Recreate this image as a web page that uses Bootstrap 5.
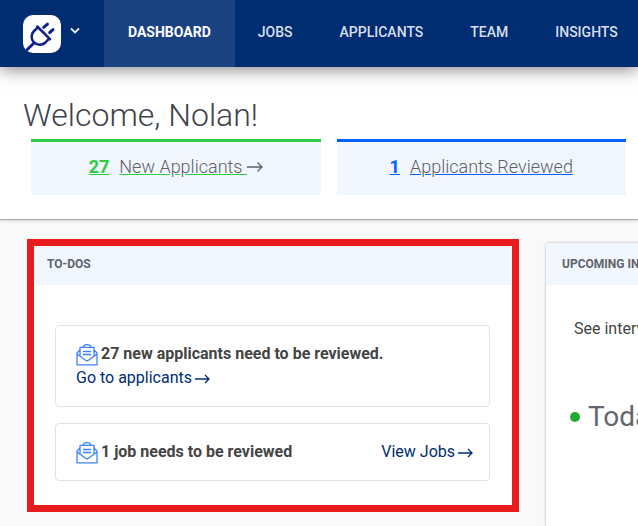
<!DOCTYPE html>
<html lang="en">
<head>
<meta charset="utf-8">
<meta name="viewport" content="width=device-width, initial-scale=1">
<title>Dashboard</title>
<link href="https://cdn.jsdelivr.net/npm/bootstrap@5.3.0/dist/css/bootstrap.min.css" rel="stylesheet">
<style>
  body { font-family: Roboto, "Liberation Sans", sans-serif; font-size: 16px; line-height: 24px; color: #444; background: #f9f9f9; overflow-x: hidden; }
  .topbar { background: #002d72; height: 67px; box-shadow: 0 2px 16px rgba(0,0,0,.5); z-index: 2; }
  .brand-menu { padding: 0 24px 6px 23px; gap: 9px; }
  .brand-menu svg:first-child { margin-top: 6px; }
  .topbar .nav-link { color: #d8dfea; font-size: 14px; font-weight: 500; padding: 0 24px 3px; }
  .topbar .nav-link:not(.active) { padding: 0 24px 3px 23px; }
  .topbar .nav-link.active { color: #fff; font-weight: 700; background: #1a4180; }
  .welcome { padding: 30px 12px 24px 23px; border-bottom: 1px solid #a8a8a8; box-shadow: 0 1px 3px rgba(0,0,0,.15); }
  .welcome h1 { font-size: 32px; line-height: 36px; font-weight: 300; margin-bottom: 6px; color: #3e444c; }
  .stats { gap: 16px; padding-left: 8px; }
  .stat { height: 56px; padding-bottom: 4px; background: #f1f6ff; border-top: 3px solid; font-size: 18px; font-weight: 300; gap: 10px; }
  .stat-label, .stat svg { color: #5c6068; }
  .stat-new { color: #2ecc40; }
  .stat-reviewed { color: #0061ff; }
  .panels { padding: 19px 0 0 27px; gap: 27px; }
  .todos { flex: 0 0 calc(100% - 119px); border: 7px solid #e81c1c; margin-bottom: 14px; }
  .panel-title { background: #f1f6ff; color: #5f636a; font-size: 12px; line-height: 15px; font-weight: 700; padding: 11px 13px 13px; margin: 0; }
  .todo-list { padding: 40px 22px 24px 21px; gap: 16px; }
  .todo { border: 1px solid #e3e3e3; border-radius: 4px; padding: 16px 16px 16px 20px; }
  .todo strong { font-weight: 700; color: #444; }
  .todo a { color: #002d72; }
  .todo-line { gap: 3px; }
  .todo-icon, .todo-arrow { margin-top: 2px; }
  .upcoming { flex: 0 0 300px; margin-top: 4px; border-radius: 4px 4px 0 0; box-shadow: 0 0 3px rgba(0,0,0,.3); overflow: hidden; }
  .upcoming .panel-title { padding: 14px 16px 13px; }
  .upcoming-body { padding: 32px 28px 0 24px; }
  .upcoming-note { margin: 0 4px; }
  .today { margin: 62px 0 0; gap: 8px; font-size: 28px; line-height: 28px; font-weight: 400; color: #63666c; }
  .today-dot { width: 10px; height: 10px; background: #22a931; }
</style>
</head>
<body class="d-flex flex-column min-vh-100">
<header class="topbar d-flex flex-shrink-0 position-relative">
  <button type="button" class="brand-menu btn border-0 rounded-0 d-flex align-items-center flex-shrink-0" aria-label="Account menu">
    <svg width="38" height="38" viewBox="0 0 38 38" aria-hidden="true">
      <rect width="38" height="38" rx="10" fill="#fff"/>
      <g fill="none" stroke="#10208c" stroke-width="2.5" stroke-linecap="round" stroke-linejoin="round">
        <path d="M14.300 11.500 27 24.200M14.300 11.500V13L11 16C8 19 8 24 10.500 27 14 30.500 19.500 30.500 22.500 27.500L25.500 24.200H27"/>
        <path stroke-width="3" d="M4.300 34.500 10.500 28.500M20.700 12.300 24.500 9.200M26.700 17.500 30 14.600"/>
      </g>
    </svg>
    <svg width="10" height="8" viewBox="0 0 10 8" fill="none" stroke="#e5eaf2" stroke-width="1.800" aria-hidden="true"><path d="m1 1.500 4 4 4-4"/></svg>
  </button>
  <nav class="nav flex-nowrap" aria-label="Main">
    <a class="nav-link active d-flex align-items-center" href="#" aria-current="page">DASHBOARD</a>
    <a class="nav-link d-flex align-items-center" href="#">JOBS</a>
    <a class="nav-link d-flex align-items-center" href="#">APPLICANTS</a>
    <a class="nav-link d-flex align-items-center" href="#">TEAM</a>
    <a class="nav-link d-flex align-items-center" href="#">INSIGHTS</a>
  </nav>
</header>
<main class="d-flex flex-column flex-grow-1">
  <section class="welcome bg-white">
    <h1>Welcome, Nolan!</h1>
    <div class="stats d-flex">
      <a href="#" class="stat stat-new flex-fill w-50 d-flex justify-content-center align-items-center text-decoration-none">
        <u class="fw-bold">27</u>
        <span class="d-flex align-items-center"><u><span class="stat-label">New Applicants&nbsp;</span></u><svg width="16" height="12" viewBox="0 0 16 12" fill="none" stroke="currentColor" stroke-width="1.300" aria-hidden="true"><path d="M0 6h15M10.500 1.500 15 6l-4.500 4.500"/></svg></span>
      </a>
      <a href="#" class="stat stat-reviewed flex-fill w-50 d-flex justify-content-center align-items-center text-decoration-none">
        <u class="fw-bold">1</u>
        <u><span class="stat-label">Applicants Reviewed</span></u>
      </a>
    </div>
  </section>
  <div class="panels d-flex flex-grow-1 align-items-start">
    <section class="todos bg-white">
      <h2 class="panel-title">TO-DOS</h2>
      <div class="todo-list d-flex flex-column">
        <div class="todo">
          <div class="todo-line d-flex align-items-center">
            <svg class="todo-icon" width="22" height="22" viewBox="0 0 22 22" fill="none" stroke="#3c82ff" stroke-width="1.300" stroke-linejoin="round" aria-hidden="true"><path d="M4 6 1 9v11.800h20V9l-3-3M7 3.200C8-.2 14-.2 15 3.200M4 12.500V3.300h14v9.200M1 10 9.500 16.300Q11 17.300 12.500 16.300L21 10M7 7.500h8M7 10.500h8"/></svg>
            <strong>27 new applicants need to be reviewed.</strong>
          </div>
          <a href="#" class="todo-line d-flex align-items-center text-decoration-none">Go to applicants <svg class="todo-arrow" width="15" height="10" viewBox="0 0 15 10" fill="none" stroke="currentColor" stroke-width="1.300" aria-hidden="true"><path d="M0 5h14M10 1l4 4-4 4"/></svg></a>
        </div>
        <div class="todo d-flex justify-content-between">
          <div class="todo-line d-flex align-items-center">
            <svg class="todo-icon" width="22" height="22" viewBox="0 0 22 22" fill="none" stroke="#3c82ff" stroke-width="1.300" stroke-linejoin="round" aria-hidden="true"><path d="M4 6 1 9v11.800h20V9l-3-3M7 3.200C8-.2 14-.2 15 3.200M4 12.500V3.300h14v9.200M1 10 9.500 16.300Q11 17.300 12.500 16.300L21 10M7 7.500h8M7 10.500h8"/></svg>
            <strong>1 job needs to be reviewed</strong>
          </div>
          <a href="#" class="todo-line d-flex align-items-center text-decoration-none">View Jobs <svg class="todo-arrow" width="15" height="10" viewBox="0 0 15 10" fill="none" stroke="currentColor" stroke-width="1.300" aria-hidden="true"><path d="M0 5h14M10 1l4 4-4 4"/></svg></a>
        </div>
      </div>
    </section>
    <section class="upcoming bg-white text-nowrap align-self-stretch">
      <h2 class="panel-title">UPCOMING INTERVIEWS</h2>
      <div class="upcoming-body">
        <p class="upcoming-note">See interviews</p>
        <h3 class="today d-flex align-items-center"><span class="today-dot rounded-circle"></span>Today</h3>
      </div>
    </section>
  </div>
</main>
<script src="https://cdn.jsdelivr.net/npm/bootstrap@5.3.0/dist/js/bootstrap.bundle.min.js"></script>
</body>
</html>
